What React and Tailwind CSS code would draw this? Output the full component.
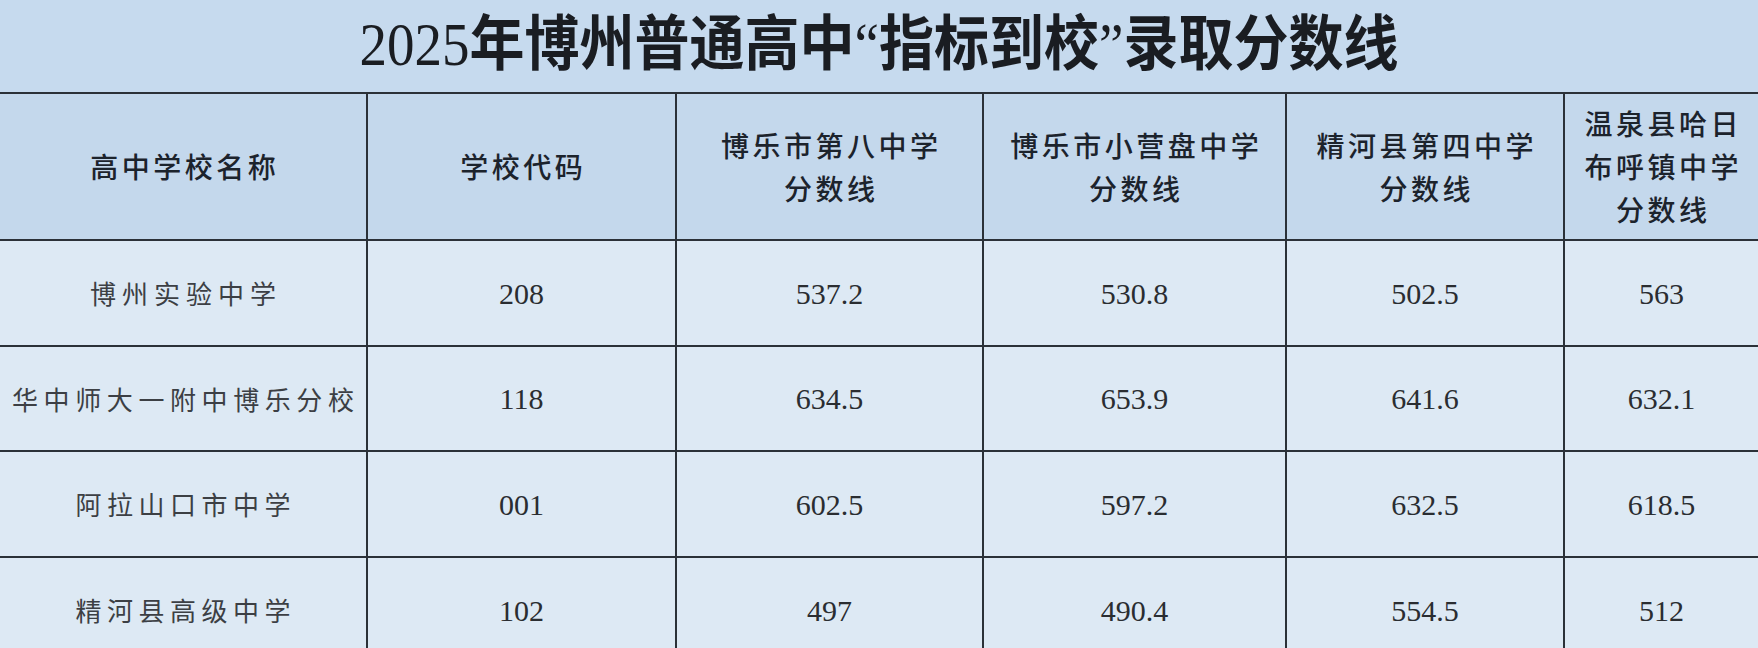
import React from 'react';

// 2025 博州 "指标到校" 录取分数线 table

const headers = [
  ['高中学校名称'],
  ['学校代码'],
  ['博乐市第八中学', '分数线'],
  ['博乐市小营盘中学', '分数线'],
  ['精河县第四中学', '分数线'],
  ['温泉县哈日', '布呼镇中学', '分数线'],
];

// name spread over a fixed width, like the justified cells of the source sheet
const rows = [
  { name: '博州实验中学', w: 'w-[186px]', h: 'h-[106px]', values: ['208', '537.2', '530.8', '502.5', '563'] },
  { name: '华中师大一附中博乐分校', w: 'w-[342px]', h: 'h-[105px]', values: ['118', '634.5', '653.9', '641.6', '632.1'] },
  { name: '阿拉山口市中学', w: 'w-[215px]', h: 'h-[106px]', values: ['001', '602.5', '597.2', '632.5', '618.5'] },
  { name: '精河县高级中学', w: 'w-[215px]', h: 'h-[106px]', values: ['102', '497', '490.4', '554.5', '512'] },
];

const cjk = "font-['Noto_Sans_CJK_SC',sans-serif]";
const serif = "font-['Liberation_Serif','Noto_Sans_CJK_SC',serif]";

export default function App() {
  return (
    <div className="w-[1758px] h-[648px] overflow-hidden bg-[#dde9f4]">
      {/* Title */}
      <div className="h-[92px] bg-[#c6daee] flex items-center justify-center pb-[4px]">
        <h1 className={`${serif} text-[55px] leading-none text-[#1a1d22] scale-y-110 whitespace-nowrap`}>
          <span className="font-normal">2025</span>
          <span className="font-bold">年博州普通高中</span>
          <span className="font-normal">“</span>
          <span className="font-bold">指标到校</span>
          <span className="font-normal">”</span>
          <span className="font-bold">录取分数线</span>
        </h1>
      </div>

      <div className="grid grid-cols-[366px_309px_307px_303px_278px_1fr]">
        {/* Header row */}
        {headers.map((lines, i) => (
          <div
            key={i}
            className={`h-[147px] bg-[#c4d8ec] border-t-2 border-[#2b3138] flex flex-col items-center justify-center ${
              i > 0 ? 'border-l-2' : ''
            }`}
          >
            {lines.map((l, j) => (
              <div
                key={j}
                className={`${cjk} text-[28px] leading-[43px] font-medium tracking-[3.5px] text-[#1c232c] pl-[3.5px] whitespace-nowrap`}
              >
                {l}
              </div>
            ))}
          </div>
        ))}

        {/* Data rows */}
        {rows.map((r, ri) => (
          <React.Fragment key={ri}>
            <div className={`${r.h} border-t-2 border-[#2b3138] flex items-center justify-center`}>
              <div className={`${r.w} flex justify-between ${cjk} text-[26px] leading-none text-[#3c3f44]`}>
                {r.name.split('').map((c, ci) => (
                  <span key={ci}>{c}</span>
                ))}
              </div>
            </div>
            {r.values.map((v, vi) => (
              <div
                key={vi}
                className={`${r.h} border-t-2 border-l-2 border-[#2b3138] flex items-center justify-center ${serif} text-[30px] text-[#2a2d31]`}
              >
                {v}
              </div>
            ))}
          </React.Fragment>
        ))}
      </div>
    </div>
  );
}
